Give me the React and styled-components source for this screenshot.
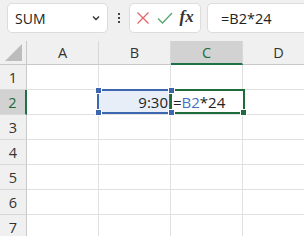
import React from 'react';
import styled, { createGlobalStyle } from 'styled-components';

const GlobalStyle = createGlobalStyle`
  html, body {
    margin: 0;
    padding: 0;
    background: #ffffff;
    overflow: hidden;
  }
  body {
    font-family: "Open Sans", "Noto Sans", "Liberation Sans", sans-serif;
  }
`;

const Sheet = styled.div`
  width: 304px;
  height: 236px;
  overflow: hidden;
  background: #fff;
`;

const FormulaBar = styled.div`
  height: 41px;
  background: #f0f0f0;
  display: flex;
  align-items: flex-start;
  padding: 3px 0 0 7px;
  box-sizing: border-box;
`;

const Box = styled.div`
  height: 30px;
  box-sizing: border-box;
  background: #fff;
  border: 1px solid #dcdcdc;
  border-radius: 5px;
  display: flex;
  align-items: center;
`;

const NameBox = styled(Box)`
  width: 101px;
  padding: 0 6px 0 7px;
  justify-content: space-between;
  font-size: 14px;
  color: #222;
`;

const Dots = styled.div`
  width: 21px;
  display: flex;
  flex-direction: column;
  align-items: center;
  justify-content: center;
  gap: 2px;
  height: 30px;
  & span {
    width: 2px;
    height: 2px;
    background: #444;
  }
`;

const ButtonsBox = styled(Box)`
  width: 72px;
  justify-content: space-around;
  padding: 0 3px;
`;

const Fx = styled.span`
  font-family: "Liberation Serif", "DejaVu Serif", serif;
  font-style: italic;
  font-weight: bold;
  font-size: 17px;
  color: #333;
  margin-top: -2px;
`;

const InputBox = styled(Box)`
  margin-left: 6px;
  flex: 1;
  border-right: none;
  border-radius: 5px 0 0 5px;
  padding-left: 13px;
  font-size: 14.5px;
  color: #222;
`;

const Grid = styled.div`
  display: grid;
  grid-template-columns: 27px repeat(4, 72px);
  grid-template-rows: 24px repeat(7, 25px);
`;

const Corner = styled.div`
  background: #f0f0f0;
  border-right: 1px solid #c8c8c8;
  border-bottom: 1px solid #c8c8c8;
  position: relative;
  &::after {
    content: '';
    position: absolute;
    right: 4px;
    bottom: 3px;
    border-style: solid;
    border-width: 0 0 17px 17px;
    border-color: transparent transparent #bcbcbc transparent;
  }
`;

const ColHead = styled.div`
  background: ${p => (p.$active ? '#d2d2d2' : '#f0f0f0')};
  border-right: 1px solid #d8d8d8;
  border-bottom: ${p => (p.$active ? '2px solid #1e7145' : '1px solid #c8c8c8')};
  display: flex;
  align-items: center;
  justify-content: center;
  font-size: 14.5px;
  color: ${p => (p.$active ? '#1e6b3c' : '#333')};
`;

const RowHead = styled.div`
  background: ${p => (p.$active ? '#d2d2d2' : '#f0f0f0')};
  border-right: ${p => (p.$active ? '2px solid #1e7145' : '1px solid #c8c8c8')};
  border-bottom: 1px solid #d8d8d8;
  display: flex;
  align-items: center;
  justify-content: center;
  font-size: 14.5px;
  color: ${p => (p.$active ? '#1e6b3c' : '#333')};
`;

const Cell = styled.div`
  border-right: 1px solid #e0e0e0;
  border-bottom: 1px solid #e0e0e0;
  font-size: 15px;
  color: #222;
  position: relative;
  display: flex;
  align-items: center;
`;

const Selected = styled.div`
  position: absolute;
  inset: ${p => p.$inset};
  border: 2px solid ${p => p.$color};
  background: ${p => p.$fill};
  display: flex;
  align-items: center;
  justify-content: ${p => p.$align};
  padding: 0 1px;
  box-sizing: border-box;
  z-index: 1;
`;

const Handle = styled.span`
  position: absolute;
  width: 5px;
  height: 5px;
  background: ${p => p.$color};
  border: 1px solid #fff;
  ${p => p.$pos}
`;

const Ref = styled.span`
  color: #4472c4;
`;

function App() {
  const cols = ['A', 'B', 'C', 'D'];
  const rows = [1, 2, 3, 4, 5, 6, 7];

  const renderCell = (r, c) => {
    if (r === 2 && c === 'B') {
      return (
        <Cell key={c + r}>
          <Selected $inset="-1px -1px 0 -2px" $color="#3c66b0" $fill="#e8eef8" $align="flex-end">
            9:30
            <Handle $color="#3c66b0" $pos="left: -4px; top: -4px;" />
            <Handle $color="#3c66b0" $pos="left: -4px; bottom: -4px;" />
          </Selected>
        </Cell>
      );
    }
    if (r === 2 && c === 'C') {
      return (
        <Cell key={c + r}>
          <Selected $inset="-1px -3px 0 -1px" $color="#1e6b3c" $fill="#fff" $align="flex-start">
            =<Ref>B2</Ref>*24
            <Handle $color="#3c66b0" $pos="left: -4px; top: -4px;" />
            <Handle $color="#3c66b0" $pos="left: -4px; bottom: -4px;" />
            <Handle $color="#1e6b3c" $pos="right: -4px; bottom: -4px;" />
          </Selected>
        </Cell>
      );
    }
    return <Cell key={c + r} />;
  };

  return (
    <Sheet>
      <GlobalStyle />
      <FormulaBar>
        <NameBox>
          <span>SUM</span>
          <svg width="10" height="10" viewBox="0 0 10 10">
            <path d="M2 3.5 L5 6.5 L8 3.5" fill="none" stroke="#333" strokeWidth="1.4" />
          </svg>
        </NameBox>
        <Dots>
          <span />
          <span />
          <span />
        </Dots>
        <ButtonsBox>
          <svg width="14" height="14" viewBox="0 0 14 14">
            <path d="M1.5 1.5 L12.5 12.5 M12.5 1.5 L1.5 12.5" stroke="#e06666" strokeWidth="1.3" />
          </svg>
          <svg width="16" height="14" viewBox="0 0 16 14">
            <path d="M1 7.5 L5.5 12 L15 2" fill="none" stroke="#5aa56f" strokeWidth="1.3" />
          </svg>
          <Fx>fx</Fx>
        </ButtonsBox>
        <InputBox>=B2*24</InputBox>
      </FormulaBar>
      <Grid>
        <Corner />
        {cols.map(c => (
          <ColHead key={c} $active={c === 'C'}>{c}</ColHead>
        ))}
        {rows.map(r => (
          <React.Fragment key={r}>
            <RowHead $active={r === 2}>{r}</RowHead>
            {cols.map(c => renderCell(r, c))}
          </React.Fragment>
        ))}
      </Grid>
    </Sheet>
  );
}

export default App;
